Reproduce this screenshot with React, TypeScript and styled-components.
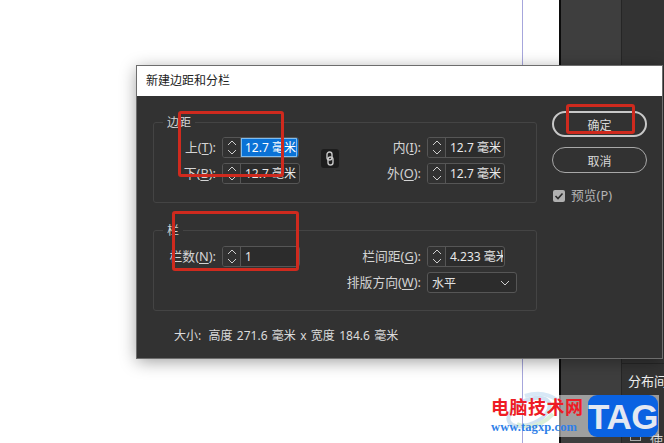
import React from "react";
import styled, { createGlobalStyle } from "styled-components";

const Global = createGlobalStyle`
  html, body { margin: 0; padding: 0; background: #fff; overflow: hidden; }
  * { box-sizing: border-box; }
`;

const FONT = '"Noto Sans", "Noto Sans CJK SC", sans-serif';

const Stage = styled.div`
  position: relative; width: 664px; height: 443px; overflow: hidden; display: flex;
  font-family: ${FONT}; font-size: 12px;
`;
const Canvas = styled.div`
  width: 559px; flex: none;
  background: linear-gradient(to right, transparent 522px, #a6a6dc 522px, #a6a6dc 523px, transparent 523px), #fff;
`;
const Edge = styled.div`
  width: 2px; flex: none; background: #0c0c0c;
`;
const ToolStrip = styled.div`
  width: 61px; flex: none; background: #3e3e3e; border-right: 1px solid #262626;
`;
const Panel = styled.div`
  flex: 1; background: #333; padding: 363px 0 0; color: #eee; font-size: 13px; overflow: hidden; white-space: nowrap;
`;
const PanelHead = styled.div`
  border-top: 1px solid #262626; padding: 8px 0 0 6px; line-height: 18px; height: 68px;
`;
const PanelCheckRow = styled.div`
  display: flex; align-items: flex-start; gap: 9px; padding-left: 8px; margin-top: -1px; color: #ccc;
`;
const PanelBox = styled.span`
  width: 11px; height: 11px; border: 1px solid #aaa; flex: none;
`;

const Dialog = styled.div`
  position: absolute; left: 137px; top: 66px; width: 525px; height: 292px;
  background: #323232; display: flex; flex-direction: column;
  box-shadow: 0 0 0 1px #6d6d6d, 0 3px 16px rgba(0,0,0,.4);
`;
const TitleBar = styled.div`
  height: 30px; flex: none; background: #fff; color: #222; padding-left: 9px; line-height: 29px; font-size: 12px;
`;
const Body = styled.div`
  flex: 1; display: flex; padding: 15px 0 0 16px;
`;
const Left = styled.div`
  width: 384px; flex: none; display: flex; flex-direction: column; gap: 27px; padding-top: 11px;
`;
const Right = styled.div`
  display: flex; flex-direction: column; margin-left: 15px; gap: 10px; width: 95px;
`;

const Section = styled.section<{ $top: number }>`
  position: relative; height: 81px; border: 1px solid #444; border-radius: 3px;
  padding-top: ${p => p.$top}px;
  display: grid; grid-template-columns: 68px 77px 40px 88px 90px; grid-auto-rows: 21px; row-gap: 5px; align-content: start;
`;
const Legend = styled.span`
  position: absolute; left: 9px; top: -9px; padding: 0 4px; background: #323232; color: #d4d4d4; line-height: 17px;
`;
const Label = styled.label<{ $col?: number }>`
  grid-column: ${p => p.$col ?? "auto"};
  color: #d4d4d4; text-align: right; padding-right: 6px; line-height: 21px; white-space: nowrap; font-size: 12.8px;
  u { text-underline-offset: 2px; }
`;
const SpinBox = styled.div<{ $focus?: boolean }>`
  width: ${p => (p.$focus ? 77 : 78)}px; height: 21px; display: flex; border: 1px solid #565656; border-radius: 3px; overflow: hidden;
  background: #2c2c2c;
`;
const Stepper = styled.div`
  width: 18px; flex: none; border-right: 1px solid #565656; display: flex; flex-direction: column; align-items: center; justify-content: center; gap: 3px;
  background: #323232;
`;
const Value = styled.div<{ $selected?: boolean }>`
  flex: 1; min-width: 0; overflow: hidden; white-space: nowrap; padding-left: 4px; line-height: 19px; color: #e8e8e8;
  border-right: 1px solid transparent;
  background: ${p => (p.$selected ? "#0a72d6" : "transparent")};
  ${p => (p.$selected ? "color:#fff; box-shadow: inset 0 0 0 1px #7fbdf0;" : "")}
`;
const LinkButton = styled.button`
  grid-row: span 2; align-self: start; margin: 12px 0 0 22px; width: 18px; height: 19px; padding: 0; border: 0; border-radius: 3px; background: #1d1d1d;
  display: flex; align-items: center; justify-content: center;
`;
const Select = styled.div`
  height: 21px; width: 90px; border: 1px solid #565656; border-radius: 3px; background: #2c2c2c; color: #e0e0e0;
  display: flex; align-items: center; justify-content: space-between; padding: 0 6px 0 4px;
`;
const Size = styled.div`
  margin-top: -11px; padding-left: 21px; color: #dcdcdc; line-height: 17px; word-spacing: 1.2px; white-space: nowrap;
`;
const SizeLead = styled.span`
  margin-right: 3px;
`;
const PillButton = styled.button<{ $primary?: boolean }>`
  height: 26px; width: 95px; border-radius: 13px; background: transparent; font: inherit; color: #d8d8d8; padding: 2px 0 0;
  border: ${p => (p.$primary ? "2px solid #c8c8c8" : "1px solid #a8a8a8")};
`;
const PreviewRow = styled.div`
  display: flex; align-items: center; gap: 6px; margin: 4px 0 0 1px; color: #b4b4b4; line-height: 17px; font-size: 12.8px;
`;
const CheckBox = styled.span`
  width: 12px; height: 12px; border-radius: 2px; background: #b0b0b0; display: flex; align-items: center; justify-content: center;
`;

const RedBox = styled.div<{ $x: number; $y: number; $w: number; $h: number }>`
  position: absolute; left: ${p => p.$x}px; top: ${p => p.$y}px; width: ${p => p.$w}px; height: ${p => p.$h}px;
  border: 3px solid #cf2a1e; border-radius: 3px; pointer-events: none;
`;

const Wash = styled.div`
  position: absolute; left: 559px; top: 395px; width: 100px; height: 42px; background: rgba(255,255,255,.5);
`;
const Swirl = styled.svg`
  position: absolute; left: 503px; top: 388px; opacity: .4;
`;
const SiteName = styled.div`
  position: absolute; left: 491px; top: 396px; color: #ee1c25; font: bold 18px/20px "Noto Sans CJK SC", sans-serif; letter-spacing: .5px; white-space: nowrap;
`;
const SiteUrl = styled.div`
  position: absolute; left: 491px; top: 419px; color: #2f7fe8; font: bold 12.5px/16px "Liberation Serif", serif; letter-spacing: .1px; white-space: nowrap;
`;
const Tag = styled.div`
  position: absolute; left: 588px; top: 395px; width: 70px; height: 42px; border-radius: 9px; background: #0a62e2; color: #e3e8f2;
  font: bold 35px/43px "Liberation Sans", sans-serif; text-align: center; letter-spacing: -.5px;
`;

const Chevron = ({ up }: { up?: boolean }) => (
  <svg width="10" height="6" viewBox="0 0 10 6" fill="none" stroke="#cfcfcf" strokeWidth="1" aria-hidden="true">
    <path d={up ? "M1 5 L5 1 L9 5" : "M1 1 L5 5 L9 1"} />
  </svg>
);

const Spin = ({ value, focus }: { value: string; focus?: boolean }) => (
  <SpinBox $focus={focus}>
    <Stepper><Chevron up /><Chevron /></Stepper>
    <Value $selected={focus}>{value}</Value>
  </SpinBox>
);

export default function App() {
  return (
    <Stage>
      <Global />
      <Canvas />
      <Edge />
      <ToolStrip />
      <Panel>
        <PanelHead>分布间距</PanelHead>
        <PanelCheckRow><PanelBox />使用</PanelCheckRow>
      </Panel>

      <Dialog>
        <TitleBar>新建边距和分栏</TitleBar>
        <Body>
          <Left>
            <Section $top={14}>
              <Legend>边距</Legend>
              <Label>上(<u>T</u>):</Label>
              <Spin value="12.7 毫米" focus />
              <LinkButton aria-label="链接">
                <svg width="10" height="15" viewBox="0 0 10 15" fill="none" stroke="#c8c8c8" strokeWidth="1.4">
                  <rect x="2" y="1" width="5" height="8" rx="2.5" />
                  <rect x="3" y="6" width="5" height="8" rx="2.5" />
                </svg>
              </LinkButton>
              <Label>内(<u>I</u>):</Label>
              <Spin value="12.7 毫米" />
              <Label>下(<u>B</u>):</Label>
              <Spin value="12.7 毫米" />
              <Label>外(<u>O</u>):</Label>
              <Spin value="12.7 毫米" />
            </Section>
            <Section $top={15}>
              <Legend>栏</Legend>
              <Label>栏数(<u>N</u>):</Label>
              <Spin value="1" />
              <Label $col={4}>栏间距(<u>G</u>):</Label>
              <Spin value="4.233 毫米" />
              <Label $col={4}>排版方向(<u>W</u>):</Label>
              <Select>水平<Chevron /></Select>
            </Section>
            <Size><SizeLead>大小:</SizeLead> 高度 271.6 毫米 x 宽度 184.6 毫米</Size>
          </Left>
          <Right>
            <PillButton $primary>确定</PillButton>
            <PillButton>取消</PillButton>
            <PreviewRow>
              <CheckBox>
                <svg width="10" height="10" viewBox="0 0 10 10" fill="none" stroke="#2c2c2c" strokeWidth="1.6"><path d="M1.5 5 L4 7.5 L8.5 2.5" /></svg>
              </CheckBox>
              预览(P)
            </PreviewRow>
          </Right>
        </Body>
      </Dialog>

      <RedBox $x={178} $y={111} $w={106} $h={66} />
      <RedBox $x={172} $y={211} $w={127} $h={60} />
      <RedBox $x={566} $y={104} $w={69} $h={30} />

      <Wash />
      <Swirl width="60" height="46" viewBox="0 0 60 46" fill="none" strokeWidth="4">
        <ellipse cx="26" cy="24" rx="22" ry="12" stroke="#8fb8e0" transform="rotate(-25 26 24)" />
        <path d="M14 36 Q32 44 50 26" stroke="#a8d8a0" />
        <path d="M22 8 Q40 2 54 12" stroke="#9cc6ea" />
      </Swirl>
      <SiteName>电脑技术网</SiteName>
      <SiteUrl>www.tagxp.com</SiteUrl>
      <Tag>TAG</Tag>
    </Stage>
  );
}
